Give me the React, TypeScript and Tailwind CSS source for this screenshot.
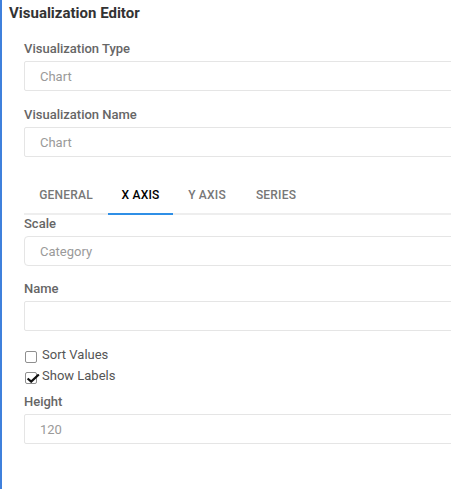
import { useState } from 'react';

const tabs = [
  { label: 'General', w: 'w-[84px]' },
  { label: 'X Axis', w: 'w-[65px]' },
  { label: 'Y Axis', w: 'w-[68px]' },
  { label: 'Series', w: 'w-[70px]' },
];

function Field({ label, value, rounded }: { label: string; value?: string; rounded?: boolean }) {
  return (
    <div>
      <div className="h-4 leading-[18px] text-[13px] font-medium text-[#666]">{label}</div>
      <div
        className={`mt-[5px] h-[30px] border border-[#e5e5e5] bg-white pl-[15px] pt-[1px] leading-[28px] text-[13px] text-[#9a9a9a] ${
          rounded ? 'rounded-[4px]' : 'rounded-[2px]'
        }`}
      >
        {value}
      </div>
    </div>
  );
}

function Check({ label, checked }: { label: string; checked?: boolean }) {
  return (
    <div className="flex h-[21px] items-center">
      <span className="relative mt-[5px] ml-[1px] h-[12px] w-[12px] rounded-[2px] border border-[#8f8f8f] bg-white">
        {checked && (
          <svg viewBox="0 0 14 10" className="absolute left-[0px] top-[1px] h-[9px] w-[14px]">
            <path d="M1 5 L5 8.5 L13.5 0.5" fill="none" stroke="#111" strokeWidth="2.4" />
          </svg>
        )}
      </span>
      <span className="ml-[5px] text-[13px] text-[#555]">{label}</span>
    </div>
  );
}

export default function App() {
  const [active, setActive] = useState('X Axis');

  return (
    <div
      className="flex min-h-[489px] w-[451px] overflow-hidden border-l-2 border-[#3f80dc] bg-white"
      style={{ fontFamily: 'Roboto, "Liberation Sans", sans-serif' }}
    >
      <div className="w-[480px] shrink-0">
        <h1 className="h-[26px] pl-[7px] text-[15px] font-bold leading-[26px] text-[#333]">Visualization Editor</h1>

        <div className="mt-[14px] pl-[22px]">
          <Field label="Visualization Type" value="Chart" />
          <div className="mt-[15px]">
            <Field label="Visualization Name" value="Chart" />
          </div>

          {/* tabs */}
          <div className="mt-[18px] flex border-b-2 border-[#eeeeee]">
            {tabs.map((t) => (
              <button
                key={t.label}
                onClick={() => setActive(t.label)}
                className={`-mb-[2px] h-10 border-b-2 pt-[1px] text-center text-[12px] font-medium uppercase tracking-[0.2px] ${t.w} ${
                  active === t.label ? 'border-[#2f8fe6] text-black' : 'border-transparent text-[#777]'
                }`}
              >
                {t.label}
              </button>
            ))}
          </div>

          <Field label="Scale" value="Category" rounded />
          <div className="mt-[14px]">
            <Field label="Name" />
          </div>

          <div className="mt-[13px]">
            <Check label="Sort Values" />
            <Check label="Show Labels" checked />
          </div>

          <div className="mt-[7px]">
            <Field label="Height" value="120" />
          </div>
        </div>
      </div>
    </div>
  );
}
